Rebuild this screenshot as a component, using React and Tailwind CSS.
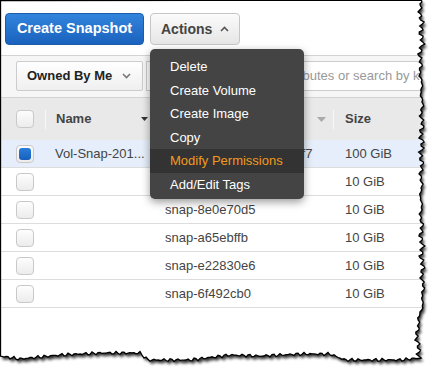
import React from "react";

// torn-paper frame helpers
const lerp = (pts, v) => {
  for (let i = 0; i < pts.length - 1; i++) {
    const [a, av] = pts[i];
    const [b, bv] = pts[i + 1];
    if (v >= a && v <= b) return av + ((bv - av) * (v - a)) / (b - a);
  }
  return pts[pts.length - 1][1];
};

const rightCtrl = [
  [0, 0], [40, 2], [60, 0], [100, 2], [200, 1], [240, 1.5],
  [300, 3], [330, -3], [350, -2], [358, 0],
];
const bottomCtrl = [
  [0, 356], [20, 359], [60, 355], [100, 353], [140, 353], [148, 360],
  [190, 360], [230, 355], [260, 356], [300, 354], [330, 354], [345, 360],
  [400, 360], [420, 358],
];

const buildPaper = () => {
  const pts = ["M0.5,0.5"];
  for (let y = 0; y <= 358; y += 2) {
    const x =
      420 +
      lerp(rightCtrl, y) +
      1.4 * Math.sin(y * 0.9) +
      1.0 * Math.sin(y * 0.31 + 0.7) +
      0.9 * Math.sin(y * 2.3 + 1);
    pts.push(`L${x.toFixed(1)},${y}`);
  }
  for (let x = 420; x >= 0; x -= 2) {
    const y =
      lerp(bottomCtrl, x) +
      0.9 * Math.sin(x * 0.8) +
      0.8 * Math.sin(x * 2.1 + 0.3);
    pts.push(`L${x},${y.toFixed(1)}`);
  }
  pts.push("L0.5,356 Z");
  return pts.join(" ");
};

const paper = buildPaper();

function Checkbox({ checked }) {
  return (
    <div className="w-[18px] h-[18px] rounded-[4px] border border-[#c9c9c9] bg-gradient-to-b from-[#fdfdfd] to-[#ececec] p-[2px]">
      {checked && (
        <div className="w-full h-full rounded-[3px] bg-gradient-to-b from-[#2a7ddb] to-[#1760bd]" />
      )}
    </div>
  );
}

const rows = [
  { name: "Vol-Snap-201...", id: "snap-0c8d1e4f2a9b3e5f7", size: "100 GiB", checked: true },
  { name: "", id: "snap-3b7f1c2d", size: "10 GiB" },
  { name: "", id: "snap-8e0e70d5", size: "10 GiB" },
  { name: "", id: "snap-a65ebffb", size: "10 GiB" },
  { name: "", id: "snap-e22830e6", size: "10 GiB" },
  { name: "", id: "snap-6f492cb0", size: "10 GiB" },
];

const menuItems = [
  "Delete",
  "Create Volume",
  "Create Image",
  "Copy",
  "Modify Permissions",
  "Add/Edit Tags",
];

export default function App() {
  return (
    <div className="relative w-[435px] h-[372px] overflow-hidden bg-white font-['Liberation_Sans',Arial,sans-serif]">
      {/* buttons */}
      <div className="flex gap-[6px] pl-[5px] pt-[13px] h-[55px]">
        <button className="h-[32px] w-[139px] rounded-[4px] border border-[#1b5dab] bg-gradient-to-b from-[#3284dc] to-[#1a62bd] text-white font-bold text-[14.5px]">
          Create Snapshot
        </button>
        <button className="h-[32px] w-[90px] rounded-[4px] border border-[#c6c6c6] bg-gradient-to-b from-[#fbfbfb] to-[#e6e6e6] text-[#444] font-bold text-[14px] flex items-center pl-[10px] gap-[8px]">
          Actions
          <svg width="9" height="6" viewBox="0 0 9 6">
            <path d="M1 5 L4.5 1.5 L8 5" fill="none" stroke="#555" strokeWidth="1.6" />
          </svg>
        </button>
      </div>

      {/* filter bar */}
      <div className="h-[43px] border-y border-[#d3d3d3] bg-[#f6f6f6] flex items-start pt-[5px] pl-[16px] gap-[3px]">
        <div className="h-[30px] w-[127px] border border-[#cccccc] rounded-[2px] bg-gradient-to-b from-white to-[#efefef] flex items-center pl-[10px] gap-[10px] text-[13px] font-bold text-[#222]">
          Owned By Me
          <svg width="9" height="6" viewBox="0 0 9 6">
            <path d="M1 1 L4.5 4.5 L8 1" fill="none" stroke="#777" strokeWidth="1.6" />
          </svg>
        </div>
        <div className="h-[30px] flex-1 border border-[#cccccc] bg-white flex items-center pl-[84px] text-[13px] text-[#999] whitespace-nowrap overflow-hidden">
          Filter by attributes or search by keyword
        </div>
      </div>

      {/* table header */}
      <div className="h-[42px] bg-[#e9e9e9] flex items-center text-[13px] font-bold text-[#444]">
        <div className="w-[45px] pl-[16px]">
          <Checkbox />
        </div>
        <div className="w-px h-[19px] bg-[#f8f8f8]" />
        <div className="w-[109px] pl-[10px] flex items-center justify-between pr-[7px]">
          Name
          <svg width="7" height="4" viewBox="0 0 7 4">
            <path d="M0 0 H7 L3.5 4 Z" fill="#333" />
          </svg>
        </div>
        <div className="w-px h-[19px] bg-[#f8f8f8]" />
        <div className="w-[177px] pl-[10px] flex items-center justify-between pr-[7px]">
          Snapshot ID
          <svg width="9" height="5" viewBox="0 0 9 5">
            <path d="M0 0 H9 L4.5 5 Z" fill="#aaa" />
          </svg>
        </div>
        <div className="w-px h-[19px] bg-[#f8f8f8]" />
        <div className="pl-[11px]">Size</div>
      </div>

      {/* rows */}
      {rows.map((r, i) => (
        <div
          key={i}
          className={`h-[28px] border-b border-[#dddddd] flex items-center text-[13px] text-[#444] ${
            r.checked ? "bg-[#e5eefa]" : "bg-white"
          }`}
        >
          <div className="w-[45px] pl-[16px]">
            <Checkbox checked={r.checked} />
          </div>
          <div className="w-[110px] pl-[10px] whitespace-nowrap">{r.name}</div>
          <div className="w-[178px] pl-[10px] whitespace-nowrap overflow-hidden">{r.id}</div>
          <div className="pl-[12px]">{r.size}</div>
        </div>
      ))}

      {/* actions menu */}
      <div className="absolute left-[150px] top-[49px] w-[154px] h-[150px] rounded-[5px] bg-[#444444] pt-[6px] shadow-[0_3px_8px_rgba(0,0,0,0.4)] text-[13px]">
        {menuItems.map((m) => (
          <div
            key={m}
            className={`h-[23.5px] flex items-center pl-[20px] ${
              m === "Modify Permissions" ? "bg-[#333333] text-[#f29a1f]" : "text-white"
            }`}
          >
            {m}
          </div>
        ))}
      </div>

      {/* torn edge frame */}
      <svg className="absolute inset-0" width="435" height="372">
        <defs>
          <filter id="blur" x="-10%" y="-10%" width="120%" height="120%">
            <feGaussianBlur stdDeviation="1.6" />
          </filter>
          <mask id="outside">
            <rect width="435" height="372" fill="white" />
            <path d={paper} fill="black" />
          </mask>
        </defs>
        <g mask="url(#outside)">
          <rect width="435" height="372" fill="white" />
          <path d={paper} transform="translate(2,3)" fill="#000" opacity="0.8" filter="url(#blur)" />
        </g>
        <path d={paper} fill="none" stroke="#000" strokeWidth="1.3" />
      </svg>
    </div>
  );
}
